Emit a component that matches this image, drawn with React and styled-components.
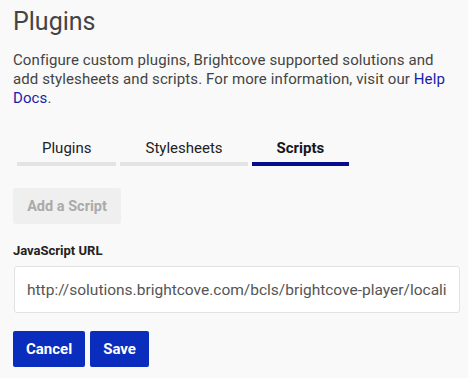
import styled, { createGlobalStyle } from "styled-components";

const GlobalStyle = createGlobalStyle`
  body {
    margin: 0;
    background: #f9f9f9;
    font-family: Roboto, "Liberation Sans", sans-serif;
    color: #444;
  }
`;

const TABS = ["Plugins", "Stylesheets", "Scripts"];

const App = () => (
  <>
    <GlobalStyle />
    <Page>
      <Title>Plugins</Title>
      <Intro>
        Configure custom plugins, Brightcove supported solutions and add
        stylesheets and scripts. For more information, visit our{" "}
        <HelpLink href="#">Help Docs</HelpLink>.
      </Intro>
      <TabList>
        {TABS.map((name) => (
          <Tab key={name} $active={name === "Scripts"}>
            {name}
          </Tab>
        ))}
      </TabList>
      <AddButton disabled>Add a Script</AddButton>
      <Label htmlFor="js-url">JavaScript URL</Label>
      <UrlInput
        id="js-url"
        defaultValue="http://solutions.brightcove.com/bcls/brightcove-player/localization/localization.js"
      />
      <Actions>
        <PrimaryButton>Cancel</PrimaryButton>
        <PrimaryButton>Save</PrimaryButton>
      </Actions>
    </Page>
  </>
);

export default App;

const Page = styled.div`
  padding: 6px 0 0 13px;
  display: flex;
  flex-direction: column;
  align-items: flex-start;
`;

const Title = styled.h1`
  margin: 0;
  font-size: 25px;
  font-weight: 400;
  line-height: 32px;
  color: #444;
`;

const Intro = styled.p`
  margin: 13px 0 0;
  max-width: 440px;
  font-size: 15px;
  letter-spacing: 0.1px;
  line-height: 19px;
  color: #444;
`;

const HelpLink = styled.a`
  color: #1c1ca8;
  text-decoration: none;
`;

const TabList = styled.div`
  display: flex;
  gap: 4px;
  margin: 30px 0 0 4px;
`;

const Tab = styled.button`
  border: none;
  background: none;
  padding: 0 25px 4px;
  font-family: inherit;
  font-size: 15px;
  line-height: 20px;
  font-weight: ${(p) => (p.$active ? 700 : 400)};
  color: ${(p) => (p.$active ? "#16161e" : "#222")};
  border-bottom: 4px solid ${(p) => (p.$active ? "#0a0a8c" : "#e4e4e4")};
`;

const AddButton = styled.button`
  margin-top: 22px;
  height: 36px;
  width: 108px;
  border: none;
  border-radius: 3px;
  background: #efefef;
  color: #aaa;
  font-family: inherit;
  font-size: 14.5px;
  font-weight: 700;
`;

const Label = styled.label`
  margin-top: 19px;
  font-size: 13px;
  font-weight: 700;
  color: #222;
`;

const UrlInput = styled.input`
  box-sizing: border-box;
  margin: 8px 0 0 1px;
  width: 446px;
  height: 47px;
  padding: 0 12px;
  border: 1px solid #e2e2e2;
  border-radius: 3px;
  background: #fff;
  font-family: inherit;
  font-size: 15.5px;
  color: #555;
  outline: none;
`;

const Actions = styled.div`
  display: flex;
  gap: 5px;
  margin-top: 18px;
`;

const PrimaryButton = styled.button`
  height: 36px;
  padding: 0 13px;
  border: none;
  border-radius: 2px;
  background: #0a2dbd;
  color: #fff;
  font-family: inherit;
  font-size: 15px;
  font-weight: 700;
`;
